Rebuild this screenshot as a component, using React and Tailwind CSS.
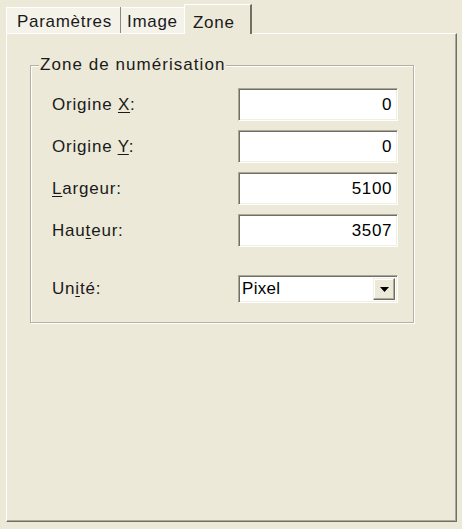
const font = { fontFamily: '"Liberation Sans", Arial, sans-serif' };

function Field({ value }) {
  return (
    <div className="w-[160px] h-[33px] bg-white border border-t-[#ACA899] border-l-[#ACA899] border-r-white border-b-white shadow-[inset_1px_1px_0_#716F64,inset_-1px_-1px_0_#F1EFE2] flex items-center justify-end pr-[5px] text-[17px] tracking-[0.6px] text-black">
      {value}
    </div>
  );
}

function Row({ label, value }) {
  return (
    <div className="flex items-center justify-between h-[33px]">
      <span className="text-[17px] tracking-[0.8px] text-[#1a1a1a]">{label}</span>
      <Field value={value} />
    </div>
  );
}

export default function App() {
  return (
    <div style={font} className="w-[462px] h-[529px] bg-[#ECE9D8] pl-[6px] pr-[5px] pt-[4px] pb-[7px] flex flex-col select-none">
      {/* tabs */}
      <div className="flex items-end h-[29px] relative z-10">
        <div className="w-[114px] h-[26px] bg-[#F4F2E9] border-t border-l border-white flex items-center pt-[2px] pl-[10px] text-[17px] tracking-[0.7px] text-[#1a1a1a]">
          Paramètres
        </div>
        <div className="w-[1px] h-[26px] bg-[#8C8A7E]" />
        <div className="w-[63px] h-[26px] bg-[#F4F2E9] border-t border-white flex items-center pt-[2px] pl-[6px] text-[17px] tracking-[0.7px] text-[#1a1a1a]">
          Image
        </div>
        <div className="w-[68px] h-[30px] -mb-px bg-[#ECE9D8] border-t border-l border-white border-r-2 border-r-[#716F64] flex items-start pt-[5px] pl-[8px] text-[17px] tracking-[0.7px] text-[#1a1a1a]">
          Zone
        </div>
      </div>

      {/* panel */}
      <div className="flex-1 bg-[#ECE9D8] border-t border-l border-white border-r border-b border-r-[#716F64] border-b-[#716F64] shadow-[inset_-1px_-1px_0_#ACA899] pt-[21px] pl-[23px]">
        <fieldset className="w-[384px] h-[268px] border border-[#B4B1A2] shadow-[inset_1px_1px_0_#fff,1px_1px_0_#fff] px-[21px] pb-[20px]">
          <legend className="-ml-[13px] px-[1px] bg-[#ECE9D8] text-[17px] tracking-[1.05px] text-[#1a1a1a] leading-[20px]">
            Zone de numérisation
          </legend>
          <div className="flex flex-col gap-[9px] mt-[13px] mr-[-6px]">
            <Row label={<>Origine <u className="underline-offset-2">X</u>:</>} value="0" />
            <Row label={<>Origine <u className="underline-offset-2">Y</u>:</>} value="0" />
            <Row label={<><u className="underline-offset-2">L</u>argeur:</>} value="5100" />
            <Row label={<>Hau<u className="underline-offset-2">t</u>eur:</>} value="3507" />
            <div className="flex items-center justify-between h-[28px] mt-[19px]">
              <span className="text-[17px] tracking-[0.8px] text-[#1a1a1a]">
                Un<u className="underline-offset-2">i</u>té:
              </span>
              <div className="w-[160px] h-[28px] bg-white border border-t-[#ACA899] border-l-[#ACA899] border-r-white border-b-white shadow-[inset_1px_1px_0_#716F64,inset_-1px_-1px_0_#F1EFE2] flex items-center pl-[3px] pr-[2px] py-[2px]">
                <span className="flex-1 text-[17px] tracking-[0.3px] text-black">Pixel</span>
                <div className="w-[22px] h-[22px] bg-[#ECE9D8] border border-t-[#F1EFE2] border-l-[#F1EFE2] border-r-[#716F64] border-b-[#716F64] shadow-[inset_-1px_-1px_0_#ACA899,inset_1px_1px_0_#fff] flex items-center justify-center">
                  <svg width="9" height="5" viewBox="0 0 9 5"><path d="M0 0h9L4.5 5z" fill="#000" /></svg>
                </div>
              </div>
            </div>
          </div>
        </fieldset>
      </div>
    </div>
  );
}
